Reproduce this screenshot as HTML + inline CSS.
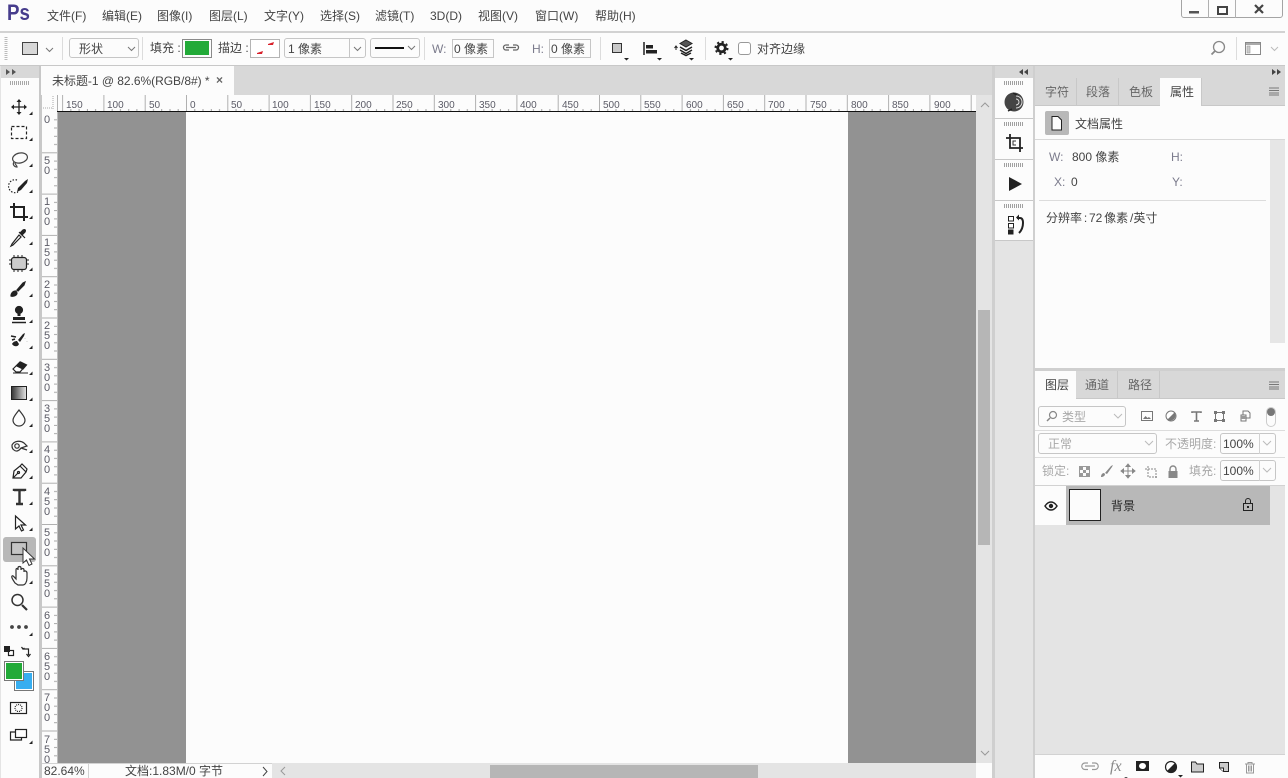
<!DOCTYPE html>
<html lang="zh"><head><meta charset="utf-8"><title>Photoshop</title>
<style>
html,body{margin:0;padding:0;width:1288px;height:778px;overflow:hidden;background:#fcfcfc}
body{position:relative;font-family:"Liberation Sans","Noto Sans CJK SC",sans-serif;font-size:12px;color:#444}
.b{position:absolute;box-sizing:border-box}
.t{position:absolute;white-space:nowrap;line-height:16px;height:16px;font-size:12px;color:#444}
.g{color:#a8a8a8}.m{color:#666}.u{color:#7b7b8c}
.box{position:absolute;box-sizing:border-box;border:1px solid #c6c6c6;border-radius:3px;background:#fcfcfc}
svg{position:absolute;left:0;top:0}
</style></head><body>

<!-- bars -->
<div class="b" style="left:0;top:31px;width:1285px;height:2px;background:#d2d2d2"></div>
<div class="b" style="left:0;top:65px;width:1285px;height:1px;background:#c8c8c8"></div>
<div class="b" style="left:0;top:66px;width:1285px;height:712px;background:#e4e4e4"></div>
<!-- tool bar -->
<div class="b" style="left:1px;top:66px;width:38px;height:712px;background:#fcfcfc"></div>
<div class="b" style="left:1px;top:66px;width:38px;height:12px;background:#d8d8d8"></div>
<div class="b" style="left:39px;top:66px;width:2px;height:712px;background:#c8c8c8"></div>
<div class="b" style="left:3px;top:537px;width:33px;height:25px;background:#b8b8b8;border-radius:3px"></div>
<!-- tabs strip -->
<div class="b" style="left:41px;top:66px;width:953px;height:29px;background:#d8d8d8"></div>
<div class="b" style="left:41px;top:66px;width:193px;height:29px;background:#fcfcfc"></div>
<!-- canvas -->
<div class="b" style="left:58px;top:112px;width:918px;height:651px;background:#929292"></div>
<div class="b" style="left:186px;top:112px;width:662px;height:651px;background:#fcfcfc"></div>
<div class="b" style="left:41px;top:95px;width:935px;height:17px;background:#fcfcfc"></div>
<div class="b" style="left:41px;top:112px;width:17px;height:651px;background:#fcfcfc"></div>
<!-- v scroll -->
<div class="b" style="left:976px;top:95px;width:16px;height:668px;background:#e4e4e4"></div>
<div class="b" style="left:978px;top:310px;width:12px;height:235px;background:#b6b6b6"></div>
<div class="b" style="left:992px;top:66px;width:3px;height:712px;background:#cfcfcf"></div>
<!-- status -->
<div class="b" style="left:41px;top:763px;width:231px;height:15px;background:#fcfcfc;border-top:1px solid #d2d2d2"></div>
<div class="b" style="left:88px;top:763px;width:1px;height:15px;background:#d2d2d2"></div>
<div class="b" style="left:272px;top:763px;width:704px;height:15px;background:#e4e4e4"></div>
<div class="b" style="left:490px;top:765px;width:268px;height:13px;background:#b6b6b6"></div>
<div class="b" style="left:976px;top:763px;width:16px;height:15px;background:#fcfcfc"></div>
<!-- right dock -->
<div class="b" style="left:995px;top:66px;width:290px;height:12px;background:#d8d8d8"></div>
<div class="b" style="left:995px;top:78px;width:38px;height:163px;background:#fcfcfc"></div>
<div class="b" style="left:995px;top:118px;width:38px;height:1px;background:#c8c8c8"></div>
<div class="b" style="left:995px;top:159px;width:38px;height:1px;background:#c8c8c8"></div>
<div class="b" style="left:995px;top:200px;width:38px;height:1px;background:#c8c8c8"></div>
<div class="b" style="left:995px;top:240px;width:38px;height:1px;background:#c8c8c8"></div>
<div class="b" style="left:1033px;top:66px;width:2px;height:712px;background:#cfcfcf"></div>
<!-- properties panel -->
<div class="b" style="left:1035px;top:78px;width:250px;height:28px;background:#d8d8d8;border-bottom:1px solid #c8c8c8"></div>
<div class="b" style="left:1076px;top:78px;width:1px;height:27px;background:#c8c8c8"></div>
<div class="b" style="left:1118px;top:78px;width:1px;height:27px;background:#c8c8c8"></div>
<div class="b" style="left:1160px;top:78px;width:41px;height:28px;background:#fcfcfc"></div>
<div class="b" style="left:1201px;top:78px;width:1px;height:27px;background:#c8c8c8"></div>
<div class="b" style="left:1035px;top:106px;width:250px;height:262px;background:#fcfcfc"></div>
<div class="b" style="left:1035px;top:139px;width:250px;height:1px;background:#d8d8d8"></div>
<div class="b" style="left:1045px;top:111px;width:24px;height:24px;background:#b8b8b8;border-radius:2px"></div>
<div class="b" style="left:1270px;top:140px;width:15px;height:203px;background:#e6e6e6"></div>
<div class="b" style="left:1039px;top:200px;width:227px;height:1px;background:#dcdcdc"></div>
<div class="b" style="left:1035px;top:368px;width:250px;height:3px;background:#cfcfcf"></div>
<!-- layers panel -->
<div class="b" style="left:1035px;top:371px;width:250px;height:28px;background:#d8d8d8;border-bottom:1px solid #c8c8c8"></div>
<div class="b" style="left:1035px;top:371px;width:41px;height:28px;background:#fcfcfc"></div>
<div class="b" style="left:1117px;top:371px;width:1px;height:27px;background:#c8c8c8"></div>
<div class="b" style="left:1159px;top:371px;width:1px;height:27px;background:#c8c8c8"></div>
<div class="b" style="left:1035px;top:399px;width:250px;height:87px;background:#fcfcfc"></div>
<div class="b" style="left:1035px;top:430px;width:250px;height:1px;background:#dcdcdc"></div>
<div class="b" style="left:1035px;top:457px;width:250px;height:1px;background:#dcdcdc"></div>
<div class="b" style="left:1035px;top:485px;width:250px;height:1px;background:#d2d2d2"></div>
<div class="b" style="left:1035px;top:486px;width:31px;height:39px;background:#fcfcfc"></div>
<div class="b" style="left:1066px;top:486px;width:204px;height:39px;background:#b8b8b8"></div>
<div class="b" style="left:1069px;top:489px;width:32px;height:32px;background:#fcfcfc;border:1px solid #222"></div>
<div class="b" style="left:1035px;top:754px;width:250px;height:24px;background:#fcfcfc;border-top:1px solid #d2d2d2"></div>
<div class="box" style="left:1038px;top:406px;width:88px;height:21px"></div>
<div class="box" style="left:1038px;top:433px;width:119px;height:21px"></div>
<div class="box" style="left:1220px;top:433px;width:56px;height:21px"></div>
<div class="box" style="left:1220px;top:460px;width:56px;height:21px"></div>
<div class="b" style="left:1259px;top:433px;width:1px;height:21px;background:#d2d2d2"></div>
<div class="b" style="left:1259px;top:460px;width:1px;height:21px;background:#d2d2d2"></div>

<!-- options bar controls -->
<div class="box" style="left:69px;top:38px;width:70px;height:20px"></div>
<div class="b" style="left:182px;top:39px;width:30px;height:19px;background:#fcfcfc;border:1px solid #8a8a8a"></div>
<div class="b" style="left:185px;top:41px;width:24px;height:14px;background:#22aa38"></div>
<div class="b" style="left:250px;top:39px;width:30px;height:19px;background:#fff;border:1px solid #b4b4b4"></div>
<div class="box" style="left:284px;top:38px;width:82px;height:20px"></div>
<div class="b" style="left:349px;top:38px;width:1px;height:20px;background:#c6c6c6"></div>
<div class="box" style="left:370px;top:38px;width:50px;height:20px"></div>
<div class="b" style="left:452px;top:39px;width:42px;height:19px;border:1px solid #c6c6c6"></div>
<div class="b" style="left:549px;top:39px;width:42px;height:19px;border:1px solid #c6c6c6"></div>
<div class="b" style="left:738px;top:42px;width:13px;height:13px;border:1px solid #999;border-radius:3px;background:#fff"></div>
<div class="b" style="left:62px;top:37px;width:1px;height:23px;background:#dcdcdc"></div>
<div class="b" style="left:142px;top:37px;width:1px;height:23px;background:#dcdcdc"></div>
<div class="b" style="left:424px;top:37px;width:1px;height:23px;background:#dcdcdc"></div>
<div class="b" style="left:600px;top:37px;width:1px;height:23px;background:#dcdcdc"></div>
<div class="b" style="left:705px;top:37px;width:1px;height:23px;background:#dcdcdc"></div>
<div class="b" style="left:1236px;top:37px;width:1px;height:23px;background:#dcdcdc"></div>
<!-- window controls -->
<div class="b" style="left:1181px;top:-3px;width:102px;height:21px;border:1px solid #a4a4a4;border-radius:3px;background:#fcfcfc"></div>
<div class="b" style="left:1208px;top:0;width:1px;height:18px;background:#b0b0b0"></div>
<div class="b" style="left:1235px;top:0;width:1px;height:18px;background:#b0b0b0"></div>

<svg width="1288" height="778" viewBox="0 0 1288 778">
<defs>
<pattern id="rx" patternUnits="userSpaceOnUse" x="186" y="95" width="41.3" height="17">
<rect x="0" y="0" width="1" height="16" fill="#b0b0b0"/>
<rect x="8.26" y="14" width="1" height="2" fill="#a0a0a0"/><rect x="16.5" y="14" width="1" height="2" fill="#a0a0a0"/><rect x="24.8" y="14" width="1" height="2" fill="#a0a0a0"/><rect x="33" y="14" width="1" height="2" fill="#a0a0a0"/>
</pattern>
<pattern id="ry" patternUnits="userSpaceOnUse" x="41" y="112" width="17" height="41.3">
<rect x="0" y="40.3" width="17" height="1" fill="#b0b0b0"/>
<rect x="13" y="7.3" width="4" height="1" fill="#a8a8a8"/><rect x="13" y="15.5" width="4" height="1" fill="#a8a8a8"/><rect x="13" y="23.8" width="4" height="1" fill="#a8a8a8"/><rect x="13" y="32" width="4" height="1" fill="#a8a8a8"/>
</pattern>
<linearGradient id="gr" x1="0" x2="1" y1="0" y2="0"><stop offset="0" stop-color="#333"/><stop offset="1" stop-color="#e8e8e8"/></linearGradient>
</defs>
<rect x="57" y="95" width="919" height="16" fill="url(#rx)"/>
<rect x="41" y="112" width="16" height="651" fill="url(#ry)"/>
<rect x="41" y="95" width="1" height="668" fill="#c8c8c8"/>
<rect x="57" y="95" width="1" height="16" fill="#b0b0b0"/>
<rect x="57" y="111" width="919" height="1" fill="#111"/>
<rect x="57" y="112" width="1" height="651" fill="#bdbdbd"/>
<path d="M53 96v13M43 108h10" stroke="#aaa" stroke-dasharray="1 1" fill="none"/>
<g font-family="Liberation Sans,sans-serif" font-size="10" fill="#5b5b66">
<text x="66" y="108">150</text><text x="107" y="108">100</text><text x="149" y="108">50</text><text x="190" y="108">0</text><text x="231" y="108">50</text><text x="272" y="108">100</text><text x="314" y="108">150</text><text x="355" y="108">200</text><text x="396" y="108">250</text><text x="438" y="108">300</text><text x="479" y="108">350</text><text x="520" y="108">400</text><text x="562" y="108">450</text><text x="603" y="108">500</text><text x="644" y="108">550</text><text x="686" y="108">600</text><text x="727" y="108">650</text><text x="768" y="108">700</text><text x="810" y="108">750</text><text x="851" y="108">800</text><text x="892" y="108">850</text><text x="934" y="108">900</text>
</g>
<g font-family="Liberation Sans,sans-serif" font-size="11" fill="#5b5b66" text-anchor="middle">
<text x="47" y="123">0</text>
<text x="47" y="164">5</text><text x="47" y="174">0</text>
<text x="47" y="205">1</text><text x="47" y="215">0</text><text x="47" y="225">0</text>
<text x="47" y="246">1</text><text x="47" y="256">5</text><text x="47" y="266">0</text>
<text x="47" y="288">2</text><text x="47" y="298">0</text><text x="47" y="308">0</text>
<text x="47" y="329">2</text><text x="47" y="339">5</text><text x="47" y="349">0</text>
<text x="47" y="371">3</text><text x="47" y="381">0</text><text x="47" y="391">0</text>
<text x="47" y="412">3</text><text x="47" y="422">5</text><text x="47" y="432">0</text>
<text x="47" y="453">4</text><text x="47" y="463">0</text><text x="47" y="473">0</text>
<text x="47" y="495">4</text><text x="47" y="505">5</text><text x="47" y="515">0</text>
<text x="47" y="536">5</text><text x="47" y="546">0</text><text x="47" y="556">0</text>
<text x="47" y="577">5</text><text x="47" y="587">5</text><text x="47" y="597">0</text>
<text x="47" y="619">6</text><text x="47" y="629">0</text><text x="47" y="639">0</text>
<text x="47" y="660">6</text><text x="47" y="670">5</text><text x="47" y="680">0</text>
<text x="47" y="701">7</text><text x="47" y="711">0</text><text x="47" y="721">0</text>
<text x="47" y="743">7</text><text x="47" y="753">5</text><text x="47" y="763">0</text>
</g>
<rect x="41" y="763" width="231" height="15" fill="#fcfcfc"/><rect x="41" y="763" width="231" height="1" fill="#d2d2d2"/><rect x="88" y="763" width="1" height="15" fill="#d2d2d2"/><rect x="41" y="763" width="1" height="15" fill="#c8c8c8"/>

<!-- grips -->
<path d="M6 37v24" stroke="#bbb" stroke-width="3" stroke-dasharray="1 1" fill="none"/>
<path d="M10 83h20" stroke="#a8a8a8" stroke-width="4" stroke-dasharray="1 1" fill="none"/>
<path d="M1004 83h20M1004 124h20M1004 165h20M1004 206h20" stroke="#a0a0a0" stroke-width="4" stroke-dasharray="1 1" fill="none"/>
<path d="M6 69l4 3-4 3zM12 69l4 3-4 3z" fill="#555"/>
<path d="M1023 69l-4 3 4 3zM1028 69l-4 3 4 3zM1272 69l4 3-4 3zM1277 69l4 3-4 3z" fill="#444"/>

<!-- options icons -->
<rect x="22.5" y="42.500" width="15" height="12" fill="#d8d8d8" stroke="#444"/>
<g fill="none" stroke="#777"><path d="M46 48l3.500 3.500 3.500-3.500M128 47l3.500 3.500 3.500-3.500M354 47l3.500 3.500 3.500-3.500M408 46l3.500 3.500 3.500-3.500"/></g>
<path d="M1271 47l3.500 3.500 3.500-3.500" fill="none" stroke="#bbb"/>
<path d="M257 53l6-2-1 3-5 0zM268 44l6-2-1 3-5 0z" fill="#d8202a"/>
<rect x="375" y="47" width="29" height="2" fill="#111"/>
<path d="M509 45h-3a2.500 2.500 0 0 0 0 5h3M513 45h3a2.500 2.500 0 0 1 0 5h-3M506 47.500h10" fill="none" stroke="#666" stroke-width="1.300"/>
<rect x="612.500" y="43.500" width="9" height="9" fill="#c8c8c8" stroke="#333"/>
<path d="M644 42v13" stroke="#222" stroke-width="1.500"/><rect x="646" y="45" width="7" height="3.500" fill="#222"/><rect x="646" y="50" width="11" height="3.500" fill="#222"/>
<path d="M676 50v-3M674.500 48l1.500-2 1.500 2" fill="none" stroke="#222"/>
<path d="M686 40l6 3.500-6 3.500-6-3.500z" fill="#555" stroke="#222"/><path d="M680 47l6 3.500 6-3.500M680 50l6 3.500 6-3.500M681 53l5 2.500 5-2.500" fill="none" stroke="#222" stroke-width="1.500"/>
<circle cx="721.500" cy="48" r="3.800" fill="none" stroke="#222" stroke-width="2.800"/><circle cx="721.500" cy="48" r="6" fill="none" stroke="#222" stroke-width="2" stroke-dasharray="2.200 2.500"/>
<path d="M624 58h5l-2.500 2.500zM657 58h5l-2.500 2.500zM689 58h5l-2.500 2.500zM728 58h5l-2.500 2.500z" fill="#222"/>
<circle cx="1219" cy="47" r="5.500" fill="none" stroke="#888" stroke-width="1.300"/><path d="M1215 51l-3.500 3.500" stroke="#888" stroke-width="1.800"/>
<rect x="1245.500" y="42.500" width="15" height="12" fill="#fff" stroke="#888"/><rect x="1246" y="43" width="14" height="2" fill="#aaa"/><rect x="1247" y="46" width="3" height="7" fill="#ccc" stroke="#999" stroke-width=".6"/>
<!-- window icons -->
<rect x="1189" y="11" width="10" height="2.500" fill="#555"/>
<rect x="1218" y="7" width="9" height="7" fill="none" stroke="#444" stroke-width="2"/>
<path d="M1255 5l8 8M1263 5l-8 8" stroke="#444" stroke-width="2.200"/>

<!-- tools -->
<g fill="none" stroke="#222" stroke-width="1.200">
<path d="M19 100v14M12 107h14" stroke-width="1.300"/><path d="M19 99l-2.500 3h5zM19 115l-2.500-3h5zM11 107l3-2.500v5zM27 107l-3-2.500v5z" fill="#222" stroke="none"/>
<rect x="11.500" y="126.500" width="15" height="12" stroke-dasharray="3 2"/>
<ellipse cx="20" cy="158" rx="7.500" ry="5" transform="rotate(-12 20 158)" stroke="#444"/><path d="M14 162c-2 3 1 5 3 5 0-2-2-2-2-4" stroke="#444"/>
<path d="M17 180a6.500 6.500 0 1 0 1 12" stroke-dasharray="1.500 1.500"/>
<path d="M17 192l1-4 7-7 3-2-1 4-6 7z" fill="#222" stroke="none"/>
<path d="M14 203v14h14M10 207h14v14" stroke-width="2"/>
<path d="M12 244l-1 2 2-1 8-8-2-2zM19 232l6 6" stroke-width="1.200"/><path d="M20 233l3-3c2-1 3 0 2 2l-3 3z" fill="#222"/>
<rect x="11.500" y="257.500" width="15" height="12" rx="2.500" fill="#ccc" stroke="#222"/>
<path d="M14 255v2M18 255v2M22 255v2M14 270v2M18 270v2M22 270v2M9 260h2M9 264h2M27 260h2M27 264h2" stroke-width="1"/>
<path d="M11 296c3 1 6-1 6-3l-1-2c-3 0-5 2-5 5z" fill="#222"/><path d="M17 290l6-7 2-1-1 3-6 6z" fill="#222"/>
<circle cx="19" cy="310" r="3.500" fill="#222"/><path d="M17.500 313h3v3h-3zM13 317h12v3H13z" fill="#222" stroke="none"/><path d="M12 322.500h14" stroke-width="1.500"/>
<path d="M12 344c2 3 6 3 7 0l-2-3c-2 0-4 1-5 3zM18 340l5-6 2-1-1 3-4 6z" fill="#222" stroke="none"/><path d="M11 336l5 1M12 340l3-1M25 338v.1M27 341v.1" stroke-width="1.600"/>
<path d="M13 369l7-7 6 3-6 7h-4z" fill="#fff"/><path d="M17 366l3.500-4 6 3-3.500 4z" fill="#222"/><path d="M13 373h15" stroke-width="1"/>
</g>
<rect x="11.500" y="386.500" width="15" height="13" fill="url(#gr)" stroke="#222"/>
<g fill="none" stroke="#222" stroke-width="1.200">
<path d="M19 410c3 4 6 7 6 10a6 6 0 0 1-12 0c0-3 3-6 6-10z" stroke="#333"/>
<path d="M12 445c2-4 8-5 12-2l3 3-6 2c-2 3-5 4-7 2-2-1-2-3-2-5z" stroke="#333"/><circle cx="17" cy="446" r="2.200" stroke="#333"/><path d="M21 448l6 2" stroke="#333"/>
<path d="M13 478l1-7 6-5 6 6-5 6zM13 478l5-5M20 466l2-2 5 5-1 3"/><circle cx="18.500" cy="472.500" r="1"/>
<path d="M14 491v-1h11v1M19.500 490v14M16 504h7" stroke-width="2.400" stroke="#333"/>
<path d="M15.500 516v13l3.500-3 2.500 5 2-1-2.500-5h4.500z" fill="#fcfcfc" stroke="#222"/>
<rect x="11.500" y="542.500" width="15" height="12" fill="#c4c4c4" stroke="#333"/>
<path d="M15 583c-2-3-4-6-3-7s2 1 4 3v-9c0-2 2-2 2 0v-2c0-2 3-2 3 0v2c0-2 3-2 3 0v2c0-2 3-1 3 1v5c0 4-2 7-4 7h-5z" stroke="#333"/>
<circle cx="17.500" cy="600" r="5.500" stroke="#333" stroke-width="1.500"/><path d="M22 605l5 5" stroke="#333" stroke-width="2.200"/>
<rect x="8.500" y="650.500" width="5" height="5" fill="#fff" stroke="#222"/>
<path d="M23 649h5.500v6M21.500 647l1.500 2 1.500-1M26.500 654l2 2.500 2-2.500" stroke="#222"/>
<rect x="10.500" y="702.500" width="16" height="11" stroke="#222"/><circle cx="18.500" cy="708" r="3.500" stroke-dasharray="1 1"/>
<rect x="15.500" y="729.500" width="11" height="8" fill="#fff" stroke="#222"/><path d="M15 732h-4.500v8h11v-2.500" stroke="#222"/>
</g>
<rect x="4" y="646" width="6" height="6" fill="#222"/>
<circle cx="12" cy="627" r="1.900" fill="#444"/><circle cx="19" cy="627" r="1.900" fill="#444"/><circle cx="26" cy="627" r="1.900" fill="#444"/>
<rect x="14.500" y="671.500" width="19" height="19" fill="#37aef0" stroke="#777"/><rect x="15.500" y="672.500" width="17" height="17" fill="none" stroke="#fff"/>
<rect x="4.500" y="661.500" width="19" height="19" fill="#22aa38" stroke="#777"/><rect x="5.500" y="662.500" width="17" height="17" fill="none" stroke="#fff"/>
<path d="M29 115h3.500v-3.500zM29 141h3.500v-3.500zM29 167h3.500v-3.500zM29 193h3.500v-3.500zM29 219h3.500v-3.500zM29 245h3.500v-3.500zM29 271h3.500v-3.500zM29 297h3.500v-3.500zM29 323h3.500v-3.500zM29 349h3.500v-3.500zM29 375h3.500v-3.500zM29 401h3.500v-3.500zM29 427h3.500v-3.500zM29 453h3.500v-3.500zM29 479h3.500v-3.500zM29 505h3.500v-3.500zM29 531h3.500v-3.500zM29 584h3.500v-3.500zM29 636h3.500v-3.500zM29 744h3.500v-3.500z" fill="#222"/>
<path d="M23 548v15l3.500-3 2.500 5.500 3-1.500-2.500-5h5z" fill="#fff" stroke="#333"/>

<!-- scroll arrows -->
<g fill="none" stroke="#999"><path d="M981 107l4-4 4 4M981 751l4 4 4-4M285 767l-4 4 4 4"/><path d="M263 767l4 4.500-4 4.500" stroke="#444"/></g>

<!-- dock icons -->
<circle cx="1014" cy="102" r="9.500" fill="#444"/><path d="M1016 96a6 6 0 0 1 0 12M1016 99a3 3 0 0 1 0 6" fill="none" stroke="#ddd"/><path d="M1008 111l4-2M1013 93l4 2" stroke="#222" stroke-width="1.500"/>
<path d="M1010 134v14h13M1006 138h14v14" fill="none" stroke="#222" stroke-width="1.800"/><path d="M1016 141h-3v4h3" fill="none" stroke="#333"/>
<path d="M1009 177l13 7-13 7z" fill="#222"/>
<path d="M1008.500 216.500h5v4.500h-5zM1008.500 223.500h5v4.500h-5z" fill="#fff" stroke="#222"/><rect x="1008" y="229.500" width="5.500" height="5" fill="#222"/>
<path d="M1017 218h3c2 0 3 2 3 5 0 5-2 8-4 10" fill="none" stroke="#222" stroke-width="2"/><path d="M1019 214.500v6l-3-3z" fill="#222"/>

<!-- panel icons -->
<path d="M1269 88h10M1269 90.500h10M1269 93h10M1269 95h10M1269 382h10M1269 384.500h10M1269 387h10M1269 389h10" stroke="#777"/>
<path d="M1052 116.500h6l3.500 3.500v10h-9.500z" fill="#fcfcfc" stroke="#222"/>
<g fill="none" stroke="#888">
<circle cx="1053" cy="415" r="3.500" stroke-width="1.200"/><path d="M1050 418l-3 3" stroke-width="1.500"/>
<path d="M1114 414l4 4 4-4M1145 441l4 4 4-4M1263 441l4 4 4-4M1263 468l4 4 4-4" stroke="#bbb"/>
<rect x="1141.500" y="411.500" width="11" height="9" stroke="#777"/><path d="M1143 419l2.500-3 2 2 1.500-1 2 2z" fill="#777" stroke="none"/>
<circle cx="1171" cy="416" r="5" stroke="#777" fill="#fff"/><path d="M1167.500 419.500a5 5 0 0 0 7-7z" fill="#777" stroke="none"/>
<path d="M1192 413v-1h9v1M1196.500 412v9M1194 421h5" stroke="#777" stroke-width="1.600"/>
<rect x="1215.500" y="412.500" width="8" height="8" stroke="#777"/><path d="M1214 411h3v3h-3zM1222 411h3v3h-3zM1214 419h3v3h-3zM1222 419h3v3h-3z" fill="#777" stroke="none"/>
<path d="M1241 415h5v6h-5zM1243 415v-4h5l2 2v5h-4" stroke="#777"/><rect x="1241" y="416" width="5" height="3" fill="#999" stroke="none"/>
<rect x="1266.500" y="407.500" width="9" height="19" rx="4.500" stroke="#ccc"/>
<rect x="1079.500" y="466.500" width="10" height="10" stroke="#999"/>
<path d="M1080 467h3v3h-3zM1086 467h3v3h-3zM1083 470h3v3h-3zM1080 473h3v3h-3zM1086 473h3v3h-3z" fill="#999" stroke="none"/>
<path d="M1101 477c2 0 4-1 4-3l-1-1c-2 0-3 2-3 4zM1105 473l6-7 2-1-1 2-5 7z" fill="#888" stroke="none"/>
<path d="M1128 465v12M1122 471h12M1128 464l-2 2.500h4zM1128 478l-2-2.500h4zM1121 471l2.500-2v4zM1135 471l-2.500-2v4z" fill="#888" stroke="#888"/>
<path d="M1148 466v11h9M1145 469h11v9" stroke="#888" stroke-dasharray="2 1"/>
<path d="M1170 471v-2a3 3 0 0 1 6 0v2" stroke-width="1.400"/><rect x="1168.500" y="471" width="9" height="7" fill="#888" stroke="none"/>
</g>
<circle cx="1271" cy="412" r="4" fill="#777"/>
<path d="M1045 506c2-3 4-4 6-4s4 1 6 4c-2 3-4 4-6 4s-4-1-6-4z" fill="#fff" stroke="#222" stroke-width="1.500"/><circle cx="1051" cy="506" r="2.200" fill="#222"/>
<path d="M1245.500 503v-2a2.500 2.500 0 0 1 5 0v2" fill="none" stroke="#222"/><rect x="1243.500" y="503.500" width="9" height="7" fill="none" stroke="#222"/><rect x="1247" y="506" width="2" height="2" fill="#222"/>
<!-- bottom bar -->
<path d="M1088 763h-3a3 3 0 0 0 0 6.500h3M1092 763h3a3 3 0 0 1 0 6.500h-3M1085 766h10" fill="none" stroke="#999" stroke-width="1.200"/>
<rect x="1136" y="761" width="13" height="10" fill="#222"/><ellipse cx="1142.500" cy="766" rx="3.500" ry="3" fill="#fff"/>
<circle cx="1171" cy="767" r="5.500" fill="#fff" stroke="#222" stroke-width="1.200"/><path d="M1167 771a5.500 5.500 0 0 0 8-8z" fill="#222"/>
<path d="M1191.500 762h4l1.500 2h6.500v8h-12z" fill="#ccc" stroke="#222"/>
<path d="M1219.500 762.500h9v9h-5l-4-3.500z" fill="#ccc" stroke="#222"/><path d="M1219.500 768h4v3.500" fill="#fff" stroke="#222"/>
<path d="M1245 764h10M1248 764v-1.500h4v1.500M1246.500 764v9h7v-9M1248.500 765.500v6M1250 765.500v6M1251.500 765.500v6" fill="none" stroke="#999"/>
<path d="M1178 775h5l-2.500 2.500zM1124 777h4l-2 1z" fill="#222"/>
</svg>

<!-- menu -->
<div class="t" style="left:7px;top:0;height:26px;line-height:26px;font-size:22px;font-weight:bold;color:#463c8c;transform:scaleX(.85);transform-origin:left">Ps</div>
<div class="t" style="left:47px;top:8px">文件(F)</div>
<div class="t" style="left:102px;top:8px">编辑(E)</div>
<div class="t" style="left:157px;top:8px">图像(I)</div>
<div class="t" style="left:209px;top:8px">图层(L)</div>
<div class="t" style="left:264px;top:8px">文字(Y)</div>
<div class="t" style="left:320px;top:8px">选择(S)</div>
<div class="t" style="left:375px;top:8px">滤镜(T)</div>
<div class="t" style="left:430px;top:8px">3D(D)</div>
<div class="t" style="left:478px;top:8px">视图(V)</div>
<div class="t" style="left:535px;top:8px">窗口(W)</div>
<div class="t" style="left:595px;top:8px">帮助(H)</div>
<!-- options text -->
<div class="t" style="left:79px;top:41px">形状</div>
<div class="t" style="left:150px;top:40px">填充 :</div>
<div class="t" style="left:218px;top:40px">描边 :</div>
<div class="t" style="left:288px;top:41px">1 像素</div>
<div class="t u" style="left:432px;top:41px">W:</div>
<div class="t" style="left:454px;top:41px">0 像素</div>
<div class="t u" style="left:532px;top:41px">H:</div>
<div class="t" style="left:551px;top:41px">0 像素</div>
<div class="t" style="left:757px;top:41px">对齐边缘</div>
<!-- doc tab -->
<div class="t" style="left:52px;top:73px;letter-spacing:-.03px">未标题-1 @ 82.6%(RGB/8#) *</div>
<div class="t" style="left:216px;top:72px;font-weight:bold;color:#666">×</div>
<!-- status -->
<div class="t" style="left:44px;top:763px">82.64%</div>
<div class="t" style="left:125px;top:763px">文档:1.83M/0 字节</div>
<!-- props -->
<div class="t m" style="left:1045px;top:84px">字符</div>
<div class="t m" style="left:1086px;top:84px">段落</div>
<div class="t m" style="left:1129px;top:84px">色板</div>
<div class="t" style="left:1170px;top:84px">属性</div>
<div class="t" style="left:1075px;top:116px">文档属性</div>
<div class="t u" style="left:1049px;top:149px">W:</div>
<div class="t" style="left:1072px;top:149px">800 像素</div>
<div class="t u" style="left:1171px;top:149px">H:</div>
<div class="t u" style="left:1054px;top:174px">X:</div>
<div class="t" style="left:1071px;top:174px">0</div>
<div class="t u" style="left:1172px;top:174px">Y:</div>
<div class="t" style="left:1046px;top:210px;word-spacing:-1.500px">分辨率 : 72 像素 /英寸</div>
<!-- layers -->
<div class="t" style="left:1045px;top:377px">图层</div>
<div class="t m" style="left:1085px;top:377px">通道</div>
<div class="t m" style="left:1128px;top:377px">路径</div>
<div class="t g" style="left:1062px;top:409px">类型</div>
<div class="t g" style="left:1048px;top:436px">正常</div>
<div class="t g" style="left:1165px;top:436px">不透明度:</div>
<div class="t" style="left:1223px;top:436px">100%</div>
<div class="t g" style="left:1042px;top:463px">锁定:</div>
<div class="t g" style="left:1189px;top:463px">填充:</div>
<div class="t" style="left:1223px;top:463px">100%</div>
<div class="t" style="left:1111px;top:498px;color:#222">背景</div>
<div class="t" style="left:1110px;top:759px;color:#888;font-family:'Liberation Serif',serif;font-style:italic;font-size:16px">fx</div>
</body></html>
